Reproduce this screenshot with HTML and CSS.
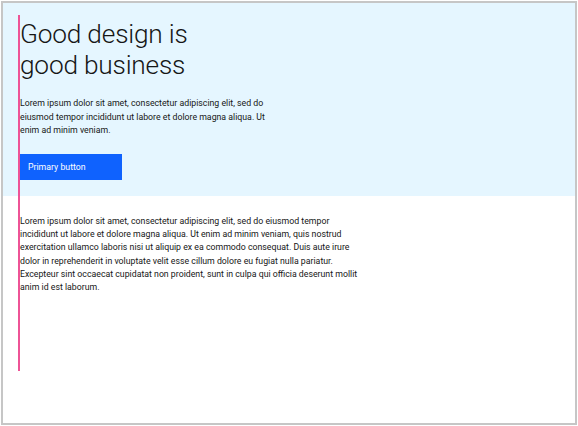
FILE: index.html
```html
<!DOCTYPE html>
<html lang="en">
<head>
<meta charset="utf-8">
<title>Good design is good business</title>
<link rel="stylesheet" href="styles.css">
</head>
<body>
<div class="frame">
  <div class="guide"></div>
  <section class="hero">
    <h1 class="hero-title">Good design is<br>good business</h1>
    <p class="hero-text">Lorem ipsum dolor sit amet, consectetur adipiscing elit, sed do eiusmod tempor incididunt ut labore et dolore magna aliqua. Ut enim ad minim veniam.</p>
    <button class="btn-primary" type="button">Primary button</button>
  </section>
  <section class="content">
    <p class="content-text">Lorem ipsum dolor sit amet, consectetur adipiscing elit, sed do eiusmod tempor incididunt ut labore et dolore magna aliqua. Ut enim ad minim veniam, quis nostrud exercitation ullamco laboris nisi ut aliquip ex ea commodo consequat. Duis aute irure dolor in reprehenderit in voluptate velit esse cillum dolore eu fugiat nulla pariatur. Excepteur sint occaecat cupidatat non proident, sunt in culpa qui officia deserunt mollit anim id est laborum.</p>
  </section>
</div>
</body>
</html>
```

FILE: styles.css
```css
* { box-sizing: border-box; }
html, body { margin: 0; padding: 0; background: #ffffff; }
body { padding: 1px; font-family: "Roboto", "Liberation Sans", sans-serif; color: #161616; }

.frame {
  position: relative;
  width: 576px;
  height: 424px;
  border: 2px solid #c6c6c6;
  background: #ffffff;
  overflow: hidden;
}

.guide {
  position: absolute;
  left: 15px;
  top: 12px;
  width: 2px;
  height: 356px;
  background: #ee5396;
  z-index: 2;
}

.hero {
  background: #e5f6ff;
  height: 193px;
  padding: 16px 0 0 17px;
  display: flex;
  flex-direction: column;
  align-items: flex-start;
}

.hero-title {
  margin: 0;
  font-family: "Roboto", "Liberation Sans", sans-serif;
  font-weight: 300;
  font-size: 26.25px;
  line-height: 30.5px;
  color: #161616;
  letter-spacing: -0.2px;
}

.hero-text {
  margin: 17px 0 0 0;
  width: 258px;
  font-size: 8.75px;
  line-height: 13.5px;
  color: #161616;
}

.btn-primary {
  margin-top: 16px;
  width: 102px;
  height: 26px;
  border: 0;
  border-radius: 0;
  background: #0f62fe;
  color: #ffffff;
  font-family: "Roboto", "Liberation Sans", sans-serif;
  font-size: 8.75px;
  text-align: left;
  padding: 0 8px;
  cursor: pointer;
}

.content {
  padding: 19px 0 0 17px;
}

.content-text {
  margin: 0;
  width: 345px;
  font-size: 8.75px;
  line-height: 13.2px;
  color: #161616;
}
```
